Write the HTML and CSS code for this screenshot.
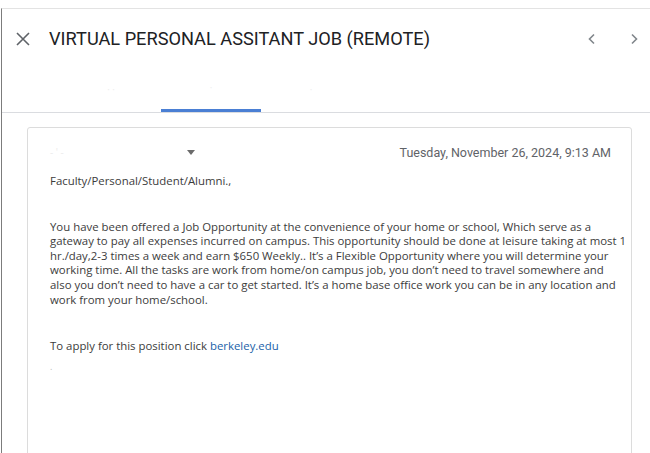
FILE: index.html
```html
<!DOCTYPE html>
<html>
<head>
<meta charset="utf-8">
<link rel="stylesheet" href="styles.css">
</head>
<body>
<div class="frame">
  <header class="topbar">
    <svg class="close" width="14" height="14" viewBox="0 0 14 14"><path d="M1 1L13 13M13 1L1 13" stroke="#5f6368" stroke-width="1.6" fill="none"/></svg>
    <h1 class="title">VIRTUAL PERSONAL ASSITANT JOB (REMOTE)</h1>
    <div class="navs">
      <svg width="10" height="12" viewBox="0 0 10 12"><path d="M7 1.5L2.5 6L7 10.5" stroke="#80868b" stroke-width="1.6" fill="none"/></svg>
      <svg width="10" height="12" viewBox="0 0 10 12"><path d="M3 1.5L7.5 6L3 10.5" stroke="#80868b" stroke-width="1.6" fill="none"/></svg>
    </div>
  </header>
  <nav class="tabs">
    <div class="tab"><span class="ghost">· ·</span></div>
    <div class="tab active"><span class="ghost">·</span></div>
    <div class="tab"><span class="ghost">·</span></div>
  </nav>
  <main class="content">
    <article class="card">
      <div class="meta">
        <div class="sender"><span class="ghost">- ' -</span><span class="caret"></span></div>
        <div class="date">Tuesday, November 26, 2024, 9:13 AM</div>
      </div>
      <p class="greet">Faculty/Personal/Student/Alumni.,</p>
      <p class="para">You have been offered a Job Opportunity at the convenience of your home or school, Which serve as a gateway to pay all expenses incurred on campus. This opportunity should be done at leisure taking at most 1 hr./day,2-3 times a week and earn $650 Weekly.. It’s a Flexible Opportunity where you will determine your working time. All the tasks are work from home/on campus job, you don’t need to travel somewhere and<br>also you don’t need to have a car to get started. It’s a home base office work you can be in any location and work from your home/school.</p>
      <p class="apply">To apply for this position click <a class="link" href="#">berkeley.edu</a></p>
      <p class="dot">.</p>
    </article>
  </main>
</div>
</body>
</html>
```
FILE: styles.css
```css
html, body {
  margin: 0;
  padding: 0;
  background: #ffffff;
}
body {
  padding-top: 8px;
  font-family: Roboto, "Liberation Sans", sans-serif;
  overflow: hidden;
  height: 453px;
}
.frame {
  margin-left: 1px;
  border-top: 1px solid #e3e3e3;
  border-left: 1px solid #7c7c7c;
  height: 460px;
}
.topbar {
  height: 59px;
  display: flex;
  align-items: center;
  padding-left: 14px;
}
.close {
  flex: none;
}
.title {
  margin: 0 0 0 19px;
  font-weight: 400;
  font-size: 18.2px;
  color: #202124;
  flex: 1;
}
.navs {
  display: flex;
  gap: 32px;
  padding-right: 11px;
}
.tabs {
  height: 44px;
  display: flex;
  padding-left: 59px;
  border-bottom: 1px solid #dadce0;
}
.tab {
  width: 100px;
  display: flex;
  align-items: center;
  justify-content: center;
  box-sizing: border-box;
}
.tab.active {
  border-bottom: 3px solid #4a7fd4;
}
.ghost {
  color: #ececec;
  font-size: 10px;
}
.content {
  padding: 14px 16px 0 25px;
}
.card {
  border: 1px solid #dcdcdc;
  border-radius: 3px;
  width: 605px;
  height: 340px;
  padding: 0 1px 0 22px;
  box-sizing: border-box;
  font-family: "Open Sans", sans-serif;
  color: #3c3c3c;
}
.meta {
  display: flex;
  justify-content: space-between;
  align-items: center;
  height: 48px;
  padding-right: 19px;
}
.sender {
  display: flex;
  align-items: center;
  width: 145px;
  justify-content: space-between;
}
.caret {
  width: 0;
  height: 0;
  border-left: 4.5px solid transparent;
  border-right: 4.5px solid transparent;
  border-top: 5px solid #6b6b6b;
}
.date {
  font-family: Roboto, sans-serif;
  font-size: 12.5px;
  color: #5f6368;
}
.greet, .para, .apply, .dot {
  margin: 0;
  font-size: 11.4px;
  line-height: 14.6px;
}
.greet {
  margin-top: -2px;
}
.para {
  margin-top: 31px;
}
.apply {
  margin-top: 32px;
}
.link {
  color: #1a5fa8;
  text-decoration: none;
}
.dot {
  color: #bbbbbb;
  margin-top: 6px;
  font-size: 9px;
}
```
